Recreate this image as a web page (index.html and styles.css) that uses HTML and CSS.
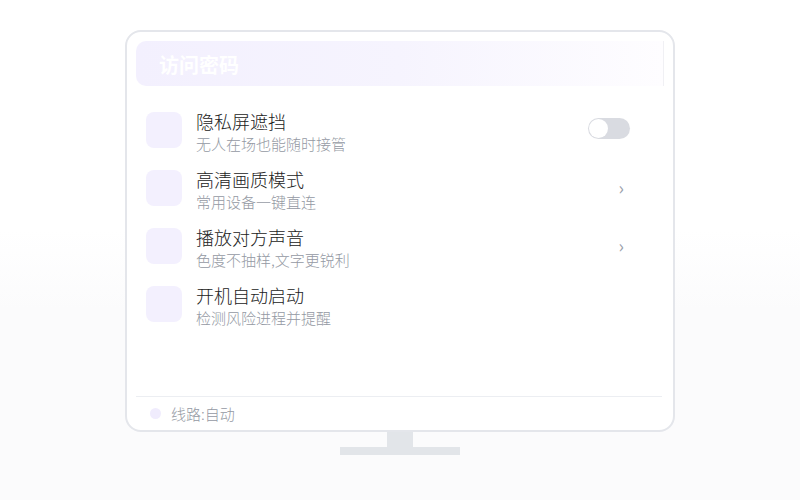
FILE: index.html
```html
<!DOCTYPE html>
<html lang="zh">
<head>
<meta charset="utf-8">
<link rel="stylesheet" href="styles.css">
</head>
<body>
<div class="page">
  <div class="monitor">
    <div class="header"><span class="header-title">访问密码</span></div>
    <div class="list">
      <div class="row">
        <div class="icon"></div>
        <div class="texts"><div class="title">隐私屏遮挡</div><div class="sub">无人在场也能随时接管</div></div>
        <div class="toggle"><span class="knob"></span></div>
      </div>
      <div class="row">
        <div class="icon"></div>
        <div class="texts"><div class="title">高清画质模式</div><div class="sub">常用设备一键直连</div></div>
        <div class="chev">›</div>
      </div>
      <div class="row">
        <div class="icon"></div>
        <div class="texts"><div class="title">播放对方声音</div><div class="sub">色度不抽样,文字更锐利</div></div>
        <div class="chev">›</div>
      </div>
      <div class="row">
        <div class="icon"></div>
        <div class="texts"><div class="title">开机自动启动</div><div class="sub">检测风险进程并提醒</div></div>
      </div>
    </div>
    <div class="footer"><span class="dot"></span><span class="route">线路:自动</span></div>
  </div>
  <div class="neck"></div>
  <div class="base"></div>
</div>
</body>
</html>
```
FILE: styles.css
```css
html, body { margin: 0; padding: 0; }
body {
  width: 800px;
  height: 500px;
  overflow: hidden;
  background: linear-gradient(to bottom, #ffffff 0%, #ffffff 46%, #fbfbfc 62%, #fbfbfc 100%);
  font-family: "Noto Sans CJK SC", "Noto Sans", sans-serif;
}
.page {
  padding-top: 30px;
  display: flex;
  flex-direction: column;
  align-items: center;
}
.monitor {
  box-sizing: border-box;
  width: 550px;
  height: 402px;
  border: 2px solid #e4e6eb;
  border-radius: 16px;
  background: #ffffff;
  padding: 9px 9px 0 9px;
  display: flex;
  flex-direction: column;
}
.header {
  height: 45px;
  border-radius: 10px 0 0 10px;
  background: linear-gradient(to right, #f3f0fe 0%, #f6f4fe 50%, #fefdff 100%);
  border-right: 1px solid #f0f0f4;
  display: flex;
  align-items: center;
  padding-left: 23px;
}
.header-title {
  font-size: 20px;
  font-weight: 700;
  color: #ffffff;
  line-height: 1;
  margin-top: 2px;
}
.list {
  margin-top: 15px;
  display: flex;
  flex-direction: column;
  flex: 1;
}
.row {
  height: 58px;
  display: flex;
  align-items: center;
  padding: 0 35px 0 10px;
}
.icon {
  width: 36px;
  height: 36px;
  border-radius: 8px;
  background: #f3f0fe;
  flex: none;
}
.texts {
  margin-left: 14px;
  padding-top: 3px;
  flex: 1;
  display: flex;
  flex-direction: column;
}
.title {
  font-size: 18px;
  line-height: 23px;
  font-weight: 300;
  color: #222222;
}
.sub {
  font-size: 15px;
  line-height: 21px;
  font-weight: 300;
  color: #9499a3;
}
.toggle {
  width: 42px;
  height: 21px;
  border-radius: 11px;
  background: #d9dbe1;
  position: relative;
  margin-top: -4px;
  margin-right: -1px;
}
.knob {
  position: absolute;
  left: 1px;
  top: 1px;
  width: 19px;
  height: 19px;
  border-radius: 50%;
  background: #ffffff;
}
.chev {
  font-size: 18px;
  color: #9aa0aa;
  line-height: 1;
  margin-right: 5px;
  margin-top: -2px;
}
.footer {
  border-top: 1px solid #eceef2;
  height: 33px;
  display: flex;
  align-items: center;
  padding-left: 14px;
  margin-right: 2px;
}
.dot {
  width: 11px;
  height: 11px;
  border-radius: 50%;
  background: #f0ecfd;
}
.route {
  margin-left: 10px;
  font-size: 15px;
  font-weight: 300;
  color: #9499a3;
}
.neck {
  width: 26px;
  height: 15px;
  background: #e2e5e9;
}
.base {
  width: 120px;
  height: 8px;
  background: #e2e5e9;
}
```
